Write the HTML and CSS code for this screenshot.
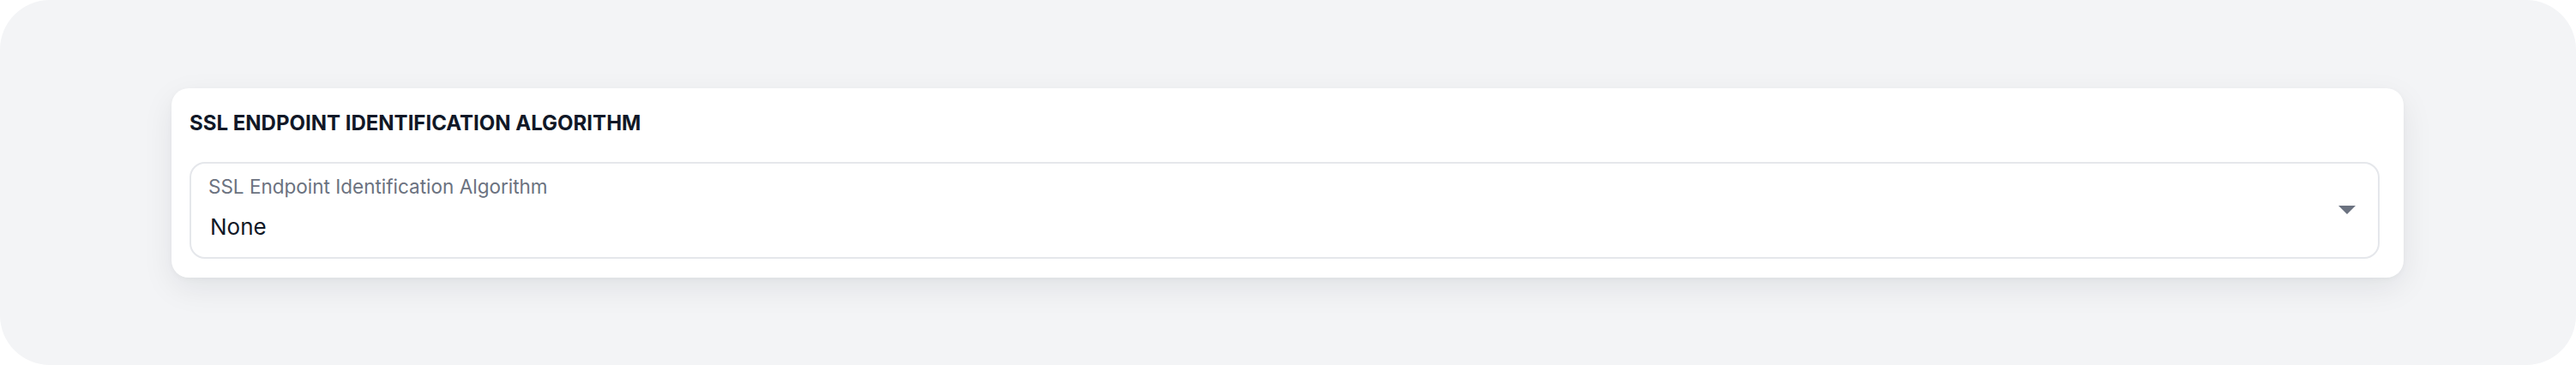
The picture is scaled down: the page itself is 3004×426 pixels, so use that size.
FILE: index.html
```html
<!DOCTYPE html>
<html lang="en">
  <head>
    <meta charset="UTF-8" />
    <meta name="viewport" content="width=device-width, initial-scale=1.0" />
    <title>SSL Endpoint Identification Algorithm</title>
    <link rel="stylesheet" href="styles.css">
  </head>
  <body>
    <div class="frame">
      <div class="card">
        <h3 class="card-title">SSL Endpoint Identification Algorithm</h3>
        <div class="select">
          <div class="select-text">
            <span class="select-label">SSL Endpoint Identification Algorithm</span>
            <span class="select-value">None</span>
          </div>
          <span class="select-arrow"></span>
        </div>
      </div>
    </div>
  </body>
</html>
```

FILE: styles.css
```css
html,
body {
  margin: 0;
  padding: 0;
  background: #fff;
}
body {
  font-family: 'Inter', 'Noto Sans', sans-serif;
  color: #111827;
}
.frame {
  display: flex;
  align-items: center;
  height: 426px;
  padding: 0 201px 0 200px;
  box-sizing: border-box;
  background-color: #f3f4f6;
  border-radius: 58px;
}
/* card */
.card {
  flex: 1;
  padding: 22px 28px 22px 21px;
  background-color: #fff;
  border-radius: 20px;
  box-shadow: 0 12px 36px rgba(17, 24, 39, 0.08), 0 2px 6px rgba(17, 24, 39, 0.03);
}
.card-title {
  margin: 2px 0 28px;
  font-size: 24px;
  line-height: 34px;
  font-weight: 700;
  letter-spacing: 0;
  text-transform: uppercase;
  color: #111827;
}
/* select */
.select {
  display: flex;
  align-items: center;
  height: 113px;
  padding: 0 26px 0 20px;
  box-sizing: border-box;
  border: 2px solid #e5e7eb;
  border-radius: 18px;
}
.select-text {
  flex: 1;
  align-self: flex-start;
  display: flex;
  flex-direction: column;
  padding-top: 12px;
}
.select-label {
  font-size: 22.5px;
  line-height: 30px;
  color: #6b7280;
}
.select-value {
  margin-top: 16px;
  padding-left: 2px;
  font-size: 26px;
  line-height: 32px;
  color: #111827;
}
.select-arrow {
  width: 0;
  height: 0;
  border-left: 10px solid transparent;
  border-right: 10px solid transparent;
  border-top: 10px solid #6b7280;
}
```
